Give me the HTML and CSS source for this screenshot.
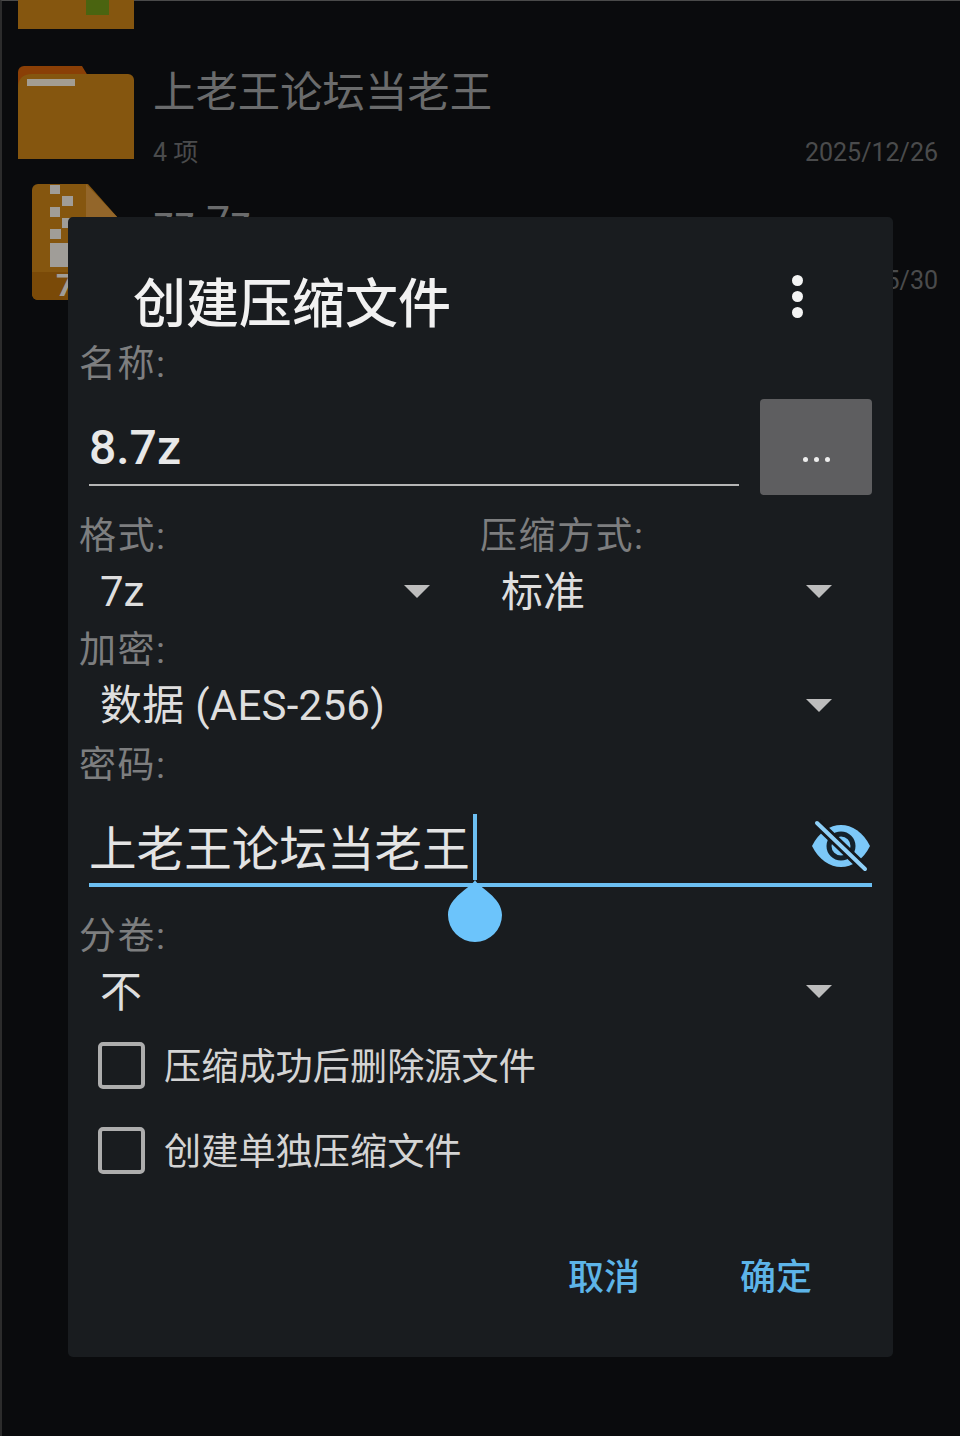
FILE: index.html
```html
<!DOCTYPE html>
<html lang="zh">
<head>
<meta charset="utf-8">
<title>创建压缩文件</title>
<link rel="stylesheet" href="styles.css">
</head>
<body>
<div class="page">
  <div class="list">
    <div class="row row-clipped">
      <svg class="icon-folder" width="116" height="29" viewBox="0 0 116 29"><rect width="116" height="29" fill="#85560f"/><rect x="68" y="0" width="23" height="15" fill="#4a6410"/></svg>
    </div>
    <div class="row row-folder">
      <svg class="icon-folder" width="116" height="95" viewBox="0 0 116 95">
        <path d="M0 8a6 6 0 0 1 6-6h58l6 10v20H0z" fill="#8a3f06"/>
        <path d="M0 24q0-14 14-14h96a6 6 0 0 1 6 6v79H0z" fill="#85560f"/>
        <rect x="9" y="15" width="48" height="7" fill="#a39d92"/>
      </svg>
      <div class="row-main">
        <div class="name">上老王论坛当老王</div>
        <div class="meta"><span>4 项</span><span>2025/12/26</span></div>
      </div>
    </div>
    <div class="row row-archive">
      <svg class="icon-zip" width="86" height="116" viewBox="0 0 86 116">
        <path d="M6 0h50l30 34v76a6 6 0 0 1-6 6H6a6 6 0 0 1-6-6V6a6 6 0 0 1 6-6z" fill="#85560f"/>
        <path d="M54 0l32 34H54z" fill="#93662a"/>
        <path d="M0 88h86v22a6 6 0 0 1-6 6H6a6 6 0 0 1-6-6z" fill="#7a4a08"/>
        <g fill="#a09d98">
          <rect x="18" y="1" width="10" height="9"/><rect x="30" y="12" width="11" height="10"/><rect x="18" y="23" width="10" height="10"/>
          <rect x="30" y="34" width="11" height="10"/><rect x="18" y="45" width="11" height="10"/><rect x="18" y="59" width="20" height="24"/>
        </g>
        <text class="zip-mark" x="24" y="112">7z</text>
      </svg>
      <div class="row-main row-main-tight">
        <div class="name">zz.7z</div>
        <div class="meta"><span></span><span>2025/05/30</span></div>
      </div>
    </div>
  </div>

  <section class="dialog">
    <header class="dialog-head">
      <h1 class="dialog-title">创建压缩文件</h1>
      <div class="kebab"><i></i><i></i><i></i></div>
    </header>

    <div class="label">名称:</div>
    <div class="name-row">
      <div class="field">8.7z</div>
      <div class="browse"><i></i><i></i><i></i></div>
    </div>

    <div class="two-col">
      <div>
        <div class="label">格式:</div>
        <div class="select"><span class="latin">7z</span><b class="arrow"></b></div>
      </div>
      <div>
        <div class="label">压缩方式:</div>
        <div class="select"><span>标准</span><b class="arrow"></b></div>
      </div>
    </div>

    <div class="label">加密:</div>
    <div class="select"><span class="mixed">数据 (AES-256)</span><b class="arrow"></b></div>

    <div class="label label-gap">密码:</div>
    <div class="password">
      <div class="password-text">上老王论坛当老王<span class="caret"></span></div>
      <svg class="eye" width="60" height="54" viewBox="0 0 60 54">
        <path d="M1 27C8 13 19 6 30 6s22 7 29 21c-7 14-18 21-29 21S8 41 1 27z" fill="#7cc8f8"/>
        <circle cx="30" cy="27" r="12" fill="#7cc8f8" stroke="#14222c" stroke-width="5"/>
        <path d="M6 4l48 46" stroke="#16191d" stroke-width="10"/>
        <path d="M6 4l48 46" stroke="#8fd0f8" stroke-width="4" stroke-linecap="round"/>
      </svg>
      <svg class="handle" width="54" height="62" viewBox="0 0 54 62"><path d="M27 0C31 8 54 17 54 35a27 27 0 0 1-54 0C0 17 23 8 27 0z" fill="#6cc4fb"/></svg>
    </div>

    <div class="label label-split">分卷:</div>
    <div class="select select-last"><span>不</span><b class="arrow"></b></div>

    <div class="check"><span class="box"></span><span>压缩成功后删除源文件</span></div>
    <div class="check"><span class="box"></span><span>创建单独压缩文件</span></div>

    <footer class="actions">
      <span>取消</span>
      <span>确定</span>
    </footer>
  </section>
</div>
</body>
</html>
```

FILE: styles.css
```css
* { box-sizing: border-box; }
html, body { margin: 0; padding: 0; }
body {
  width: 960px;
  height: 1436px;
  overflow: hidden;
  background: #0a0b0d;
  font-family: Roboto, "Noto Sans CJK SC", sans-serif;
}
.page {
  position: relative;
  width: 960px;
  height: 1436px;
  border-top: 1px solid #4a4a4a;
  border-left: 2px solid #2c2c2c;
}

/* background file list */
.list { display: flex; flex-direction: column; margin-top: -1px; padding-right: 20px; }
.row { display: flex; align-items: flex-start; }
.row-clipped { height: 29px; padding-left: 16px; }
.row-folder { margin-top: 32px; padding-left: 16px; height: 123px; }
.icon-folder { display: block; flex: none; }
.row-folder .icon-folder { margin-top: 3px; }
.row-main { flex: 1; margin-left: 19px; padding-top: 2px; }
.name { height: 60px; line-height: 60px; font-size: 42.4px; color: #6a6b6c; }
.meta {
  display: flex;
  justify-content: space-between;
  height: 40px;
  line-height: 40px;
  margin-top: 10px;
  padding-right: 2px;
  font-size: 25px;
  color: #4a4b4c;
}
.row-archive { padding-left: 30px; }
.icon-zip { display: block; flex: none; }
.zip-mark { font-size: 32px; font-weight: 700; fill: #a09d98; font-family: Roboto, sans-serif; }
.row-main-tight { margin-left: 35px; padding-top: 8px; }
.row-main-tight .meta { margin-top: 9px; }

/* dialog */
.dialog {
  position: absolute;
  left: 66px;
  top: 216px;
  width: 825px;
  padding: 46px 21px 58px 12px;
  background: #191c1f;
  border-radius: 5px;
  display: flex;
  flex-direction: column;
}
.dialog-head { display: flex; justify-content: space-between; height: 80px; }
.dialog-title {
  margin: 0 0 0 53px;
  height: 80px;
  padding-top: 2px;
  line-height: 80px;
  font-size: 53px;
  font-weight: 500;
  color: #f1f1f1;
}
.kebab { display: flex; flex-direction: column; gap: 5px; margin: 12px 69px 0 0; }
.kebab i { width: 11px; height: 11px; border-radius: 50%; background: #f4f4f4; }

.label {
  height: 40px;
  padding-top: 2px;
  margin-left: -1px;
  line-height: 40px;
  font-size: 37px;
  letter-spacing: 1.5px;
  color: #7d7e7f;
}
.label-gap { margin-top: 1px; }
.label-split { margin-top: 28px; }

.name-row { display: flex; gap: 21px; height: 96px; margin-top: 16px; margin-bottom: 20px; padding-left: 9px; }
.field {
  width: 650px;
  height: 87px;
  padding: 19px 0 0 0;
  line-height: 60px;
  font-size: 48px;
  font-weight: 500;
  color: #e8e8e8;
  border-bottom: 2px solid #b5b5b5;
}
.browse {
  flex: 1;
  display: flex;
  justify-content: center;
  align-items: flex-end;
  gap: 6px;
  padding-bottom: 33px;
  background: #5e5e60;
  border-radius: 4px;
}
.browse i { width: 5px; height: 5px; border-radius: 50%; background: #eee; }

.two-col { display: grid; grid-template-columns: 390px 391px; column-gap: 11px; }

.select {
  display: flex;
  justify-content: space-between;
  align-items: center;
  height: 74px;
  padding: 0 40px 2px 20px;
  font-size: 42px;
  color: #dedede;
}
.select span { margin-bottom: 6px; }
.select .latin { margin-bottom: 0; }
.select .mixed { margin-bottom: 8px; letter-spacing: .25px; }
.select-last { height: 68px; padding: 4px 40px 0 20px; }
.arrow {
  width: 0;
  height: 0;
  border-left: 13px solid transparent;
  border-right: 13px solid transparent;
  border-top: 13px solid #bdbdbd;
}

.password {
  position: relative;
  display: flex;
  justify-content: space-between;
  height: 103px;
  margin-left: 9px;
  border-bottom: 4px solid #6cbff2;
}
.password-text {
  display: flex;
  align-items: flex-start;
  height: 96px;
  padding: 36px 0 0 0;
  line-height: 60px;
  font-size: 47.6px;
  color: #e4e4e4;
}
.caret { width: 4px; height: 66px; margin: -6px 0 0 3px; background: #6cbff2; }
.eye { margin: 35px 1px 0 0; }
.handle { position: absolute; left: 359px; top: 96px; }

.check {
  display: flex;
  align-items: center;
  gap: 19px;
  height: 85px;
  padding-left: 18px;
  font-size: 37.2px;
  color: #d4d4d4;
}
.check span:last-child { margin-bottom: 4px; }
.box { flex: none; width: 47px; height: 47px; border: 4px solid #adadad; border-radius: 5px; }

.actions {
  display: flex;
  justify-content: flex-end;
  gap: 100px;
  height: 46px;
  margin-top: 60px;
  padding: 2px 60px 0 0;
  line-height: 46px;
  font-size: 36px;
  font-weight: 500;
  color: #5db4e8;
}
```
